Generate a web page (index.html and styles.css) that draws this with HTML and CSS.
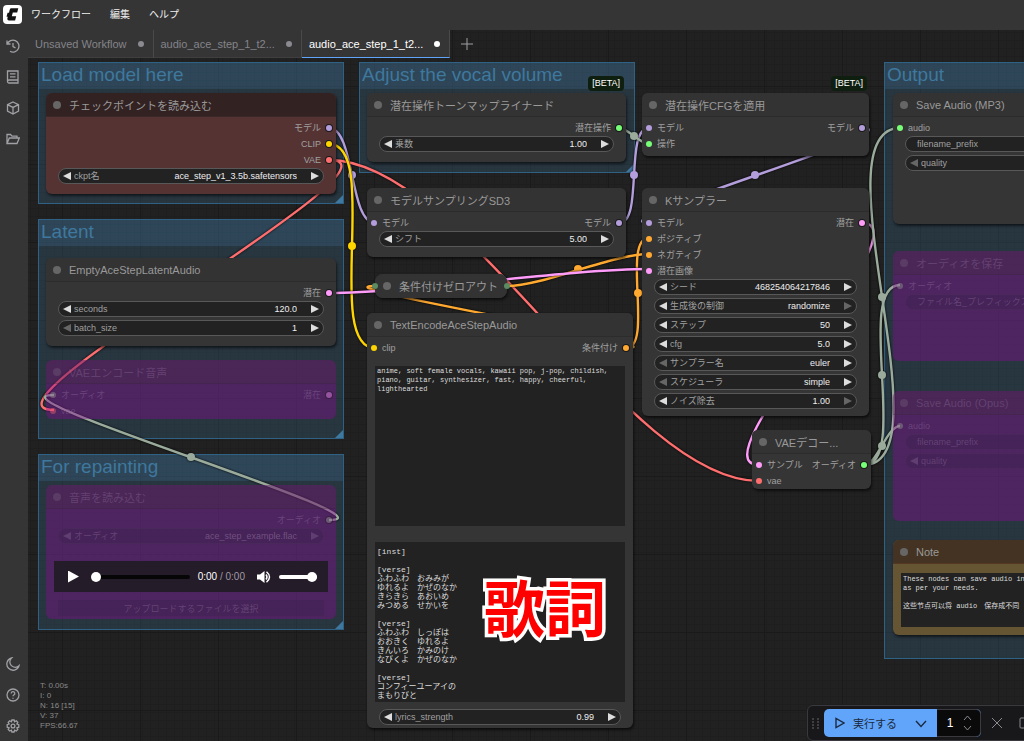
FILE: index.html
```html
<!DOCTYPE html>
<html lang="ja">
<head>
  <meta charset="UTF-8">
  <meta name="viewport" content="width=device-width, initial-scale=1.0">
  <title>audio_ace_step_1_t2a_song - ComfyUI</title>
  <link rel="stylesheet" href="styles.css">
</head>
<body>

  <!-- graph canvas, lies under the bars -->
  <main class="graph">

    <section class="group group-load"><h2>Load model here</h2></section>
    <section class="group group-vocal"><h2>Adjust the vocal volume</h2></section>
    <section class="group group-latent"><h2>Latent</h2></section>
    <section class="group group-repaint"><h2>For repainting</h2></section>
    <section class="group group-output"><h2>Output</h2></section>

    <svg class="links" aria-hidden="true">
      <g class="link model">
        <path d="M329 128C355 128 349 223 375 223"/><circle cx="352" cy="175" r="4"/>
        <path d="M619 223C644 223 624 128 649 128"/><circle cx="634" cy="175" r="4"/>
        <path d="M862 128C920 128 591 223 649 223"/><circle cx="755" cy="175" r="4"/>
      </g>
      <g class="link vae">
        <path d="M329 160C422 160 -39 410 54 410"/>
        <path d="M329 160C463 160 625 481 759 481"/>
      </g>
      <g class="link cond">
        <path d="M626 348C691 348 310 286 375 286"/>
        <path d="M507 286C543 286 613 254 649 254"/><circle cx="578" cy="269" r="4"/>
        <path d="M626 348C654 348 621 238 649 238"/><circle cx="638" cy="293" r="4"/>
      </g>
      <g class="link clip">
        <path d="M329 144C381 144 323 348 375 348"/><circle cx="352" cy="246" r="4"/>
      </g>
      <g class="link latent">
        <path d="M329 293C409 293 569 269 649 269"/>
        <path d="M862 223C928 223 693 465 759 465"/>
      </g>
      <g class="link other">
        <path d="M619 128C628 128 640 144 649 144"/><circle cx="634" cy="136" r="4"/>
        <path d="M864 465C949 465 815 128 900 128"/><circle cx="882" cy="297" r="4"/>
        <path d="M864 465C910 465 854 285 900 285"/><circle cx="882" cy="375" r="4"/>
        <path d="M864 465C877 465 887 426 900 426"/><circle cx="882" cy="446" r="4"/>
        <path d="M329 520C404 520 -21 395 54 395"/><circle cx="191" cy="457" r="4"/>
      </g>
    </svg>

    <article class="node red n-checkpoint">
      <h3>チェックポイントを読み込む</h3>
      <div class="slots">
        <div class="slot"><span class="out model">モデル</span></div>
        <div class="slot"><span class="out clip">CLIP</span></div>
        <div class="slot"><span class="out vae">VAE</span></div>
      </div>
      <div class="widgets">
        <div class="widget">
          <button class="prev" aria-label="前へ"></button>
          <label for="ckpt">ckpt名</label>
          <select id="ckpt"><option>ace_step_v1_3.5b.safetensors</option></select>
          <button class="next" aria-label="次へ"></button>
        </div>
      </div>
    </article>

    <article class="node n-empty">
      <h3>EmptyAceStepLatentAudio</h3>
      <div class="slots">
        <div class="slot"><span class="out latent">潜在</span></div>
      </div>
      <div class="widgets">
        <div class="widget">
          <button class="prev" aria-label="減らす"></button>
          <label for="seconds">seconds</label>
          <input id="seconds" value="120.0">
          <button class="next" aria-label="増やす"></button>
        </div>
        <div class="widget">
          <button class="prev" aria-label="減らす" disabled></button>
          <label for="batch">batch_size</label>
          <input id="batch" value="1">
          <button class="next" aria-label="増やす"></button>
        </div>
      </div>
    </article>

    <article class="node bypassed n-encode">
      <h3>VAEエンコード音声</h3>
      <div class="slots">
        <div class="slot"><span class="in other">オーディオ</span><span class="out latent">潜在</span></div>
        <div class="slot"><span class="in vae">vae</span></div>
      </div>
    </article>

    <article class="node bypassed n-loadaudio">
      <h3>音声を読み込む</h3>
      <div class="slots">
        <div class="slot"><span class="out other">オーディオ</span></div>
      </div>
      <div class="widgets">
        <div class="widget">
          <button class="prev" aria-label="前へ"></button>
          <label for="audio">オーディオ</label>
          <select id="audio"><option>ace_step_example.flac</option></select>
          <button class="next" aria-label="次へ"></button>
        </div>
      </div>
      <div class="player">
        <button class="play" aria-label="再生"></button>
        <input class="seek" type="range" min="0" max="100" value="0" aria-label="再生位置">
        <span class="time">0:00 <span>/ 0:00</span></span>
        <button class="mute" aria-label="ミュート">
          <svg viewBox="0 0 14 14" width="14" height="14">
            <path fill="#fff" d="M0 4.5H3L7.5 1V13L3 9.5H0Z"/>
            <path fill="none" stroke="#fff" stroke-width="1.5" d="M9 4.5Q11 7 9 9.5M9.5 1.8Q15.5 7 9.5 12.2"/>
          </svg>
        </button>
        <input class="volume" type="range" min="0" max="100" value="100" aria-label="音量">
      </div>
      <button class="upload">アップロードするファイルを選択</button>
    </article>

    <article class="node n-tonemap">
      <span class="beta">[BETA]</span>
      <h3>潜在操作トーンマップライナード</h3>
      <div class="slots">
        <div class="slot"><span class="out audio">潜在操作</span></div>
      </div>
      <div class="widgets">
        <div class="widget">
          <button class="prev" aria-label="減らす"></button>
          <label for="mult">乗数</label>
          <input id="mult" value="1.00">
          <button class="next" aria-label="増やす"></button>
        </div>
      </div>
    </article>

    <article class="node n-sd3">
      <h3>モデルサンプリングSD3</h3>
      <div class="slots">
        <div class="slot"><span class="in model">モデル</span><span class="out model">モデル</span></div>
      </div>
      <div class="widgets">
        <div class="widget">
          <button class="prev" aria-label="減らす"></button>
          <label for="shift">シフト</label>
          <input id="shift" value="5.00">
          <button class="next" aria-label="増やす"></button>
        </div>
      </div>
    </article>

    <article class="node collapsed n-zero">
      <h3>条件付けゼロアウト</h3>
    </article>

    <article class="node n-encodetext">
      <h3>TextEncodeAceStepAudio</h3>
      <div class="slots">
        <div class="slot"><span class="in clip">clip</span><span class="out cond">条件付け</span></div>
      </div>
      <div class="texts">
        <textarea class="tags" aria-label="tags" spellcheck="false">anime, soft female vocals, kawaii pop, j-pop, childish,
piano, guitar, synthesizer, fast, happy, cheerful,
lighthearted</textarea>
        <textarea class="lyrics" aria-label="lyrics" spellcheck="false">[inst]

[verse]
ふわふわ　おみみが
ゆれるよ　かぜのなか
きらきら　あおいめ
みつめる　せかいを

[verse]
ふわふわ　しっぽは
おおきく　ゆれるよ
きんいろ　かみのけ
なびくよ　かぜのなか

[verse]
コンフィーユーアイの
まもりびと</textarea>
      </div>
      <div class="widgets">
        <div class="widget">
          <button class="prev" aria-label="減らす"></button>
          <label for="strength">lyrics_strength</label>
          <input id="strength" value="0.99">
          <button class="next" aria-label="増やす"></button>
        </div>
      </div>
      <strong class="callout">歌詞</strong>
    </article>

    <article class="node n-cfg">
      <span class="beta">[BETA]</span>
      <h3>潜在操作CFGを適用</h3>
      <div class="slots">
        <div class="slot"><span class="in model">モデル</span><span class="out model">モデル</span></div>
        <div class="slot"><span class="in audio">操作</span></div>
      </div>
    </article>

    <article class="node n-sampler">
      <h3>Kサンプラー</h3>
      <div class="slots">
        <div class="slot"><span class="in model">モデル</span><span class="out latent">潜在</span></div>
        <div class="slot"><span class="in cond">ポジティブ</span></div>
        <div class="slot"><span class="in cond">ネガティブ</span></div>
        <div class="slot"><span class="in latent">潜在画像</span></div>
      </div>
      <div class="widgets">
        <div class="widget">
          <button class="prev" aria-label="減らす"></button>
          <label for="seed">シード</label>
          <input id="seed" value="468254064217846">
          <button class="next" aria-label="増やす"></button>
        </div>
        <div class="widget">
          <button class="prev" aria-label="前へ"></button>
          <label for="control">生成後の制御</label>
          <select id="control"><option>randomize</option></select>
          <button class="next" aria-label="次へ" disabled></button>
        </div>
        <div class="widget">
          <button class="prev" aria-label="減らす"></button>
          <label for="steps">ステップ</label>
          <input id="steps" value="50">
          <button class="next" aria-label="増やす"></button>
        </div>
        <div class="widget">
          <button class="prev" aria-label="減らす"></button>
          <label for="cfg">cfg</label>
          <input id="cfg" value="5.0">
          <button class="next" aria-label="増やす"></button>
        </div>
        <div class="widget">
          <button class="prev" aria-label="前へ" disabled></button>
          <label for="sampler">サンプラー名</label>
          <select id="sampler"><option>euler</option></select>
          <button class="next" aria-label="次へ"></button>
        </div>
        <div class="widget">
          <button class="prev" aria-label="前へ" disabled></button>
          <label for="scheduler">スケジューラ</label>
          <select id="scheduler"><option>simple</option></select>
          <button class="next" aria-label="次へ"></button>
        </div>
        <div class="widget">
          <button class="prev" aria-label="減らす"></button>
          <label for="denoise">ノイズ除去</label>
          <input id="denoise" value="1.00">
          <button class="next" aria-label="増やす" disabled></button>
        </div>
      </div>
    </article>

    <article class="node n-decode">
      <h3>VAEデコー...</h3>
      <div class="slots">
        <div class="slot"><span class="in latent">サンプル</span><span class="out audio">オーディオ</span></div>
        <div class="slot"><span class="in vae">vae</span></div>
      </div>
    </article>

    <article class="node n-mp3">
      <h3>Save Audio (MP3)</h3>
      <div class="slots">
        <div class="slot"><span class="in audio">audio</span></div>
      </div>
      <div class="widgets">
        <div class="widget plain">
          <label for="mp3name">filename_prefix</label>
          <input id="mp3name" value="">
        </div>
        <div class="widget">
          <button class="prev" aria-label="前へ" disabled></button>
          <label for="mp3q">quality</label>
          <input id="mp3q" value="">
        </div>
      </div>
    </article>

    <article class="node bypassed n-save">
      <h3>オーディオを保存</h3>
      <div class="slots">
        <div class="slot"><span class="in other">オーディオ</span></div>
      </div>
      <div class="widgets">
        <div class="widget plain">
          <label for="savename">ファイル名_プレフィックス</label>
          <input id="savename" value="">
        </div>
      </div>
    </article>

    <article class="node bypassed n-opus">
      <h3>Save Audio (Opus)</h3>
      <div class="slots">
        <div class="slot"><span class="in other">audio</span></div>
      </div>
      <div class="widgets">
        <div class="widget plain">
          <label for="opusname">filename_prefix</label>
          <input id="opusname" value="">
        </div>
        <div class="widget">
          <button class="prev" aria-label="前へ"></button>
          <label for="opusq">quality</label>
          <input id="opusq" value="">
        </div>
      </div>
    </article>

    <article class="node note n-note">
      <h3>Note</h3>
      <textarea aria-label="Note" spellcheck="false">These nodes can save audio in
as per your needs.

这些节点可以将 audio　保存成不同</textarea>
    </article>

    <div class="stats">
      <div>T: 0.00s</div>
      <div>I: 0</div>
      <div>N: 16 [15]</div>
      <div>V: 37</div>
      <div>FPS:66.67</div>
    </div>
  </main>

  <div class="app">
    <header class="topbar">
      <svg class="logo" viewBox="0 0 19 19" width="19" height="19">
        <rect width="19" height="19" rx="4" fill="#fff"/>
        <path fill="#111" d="M8 3.200H15.300L14.200 7.400H9.800L8.800 11.200H13.200L12.100 15.400H6C4.600 15.400 4.100 14.500 4.400 13.300L4.800 11.700H3.500L4.600 7.700H6L6.600 5.200C6.900 4 7.300 3.200 8 3.200Z"/>
      </svg>
      <nav class="menu">
        <button>ワークフロー</button>
        <button>編集</button>
        <button>ヘルプ</button>
      </nav>
    </header>

    <aside class="sidebar">
      <div>
        <button aria-label="履歴"><svg viewBox="0 0 14 14"><path d="M1 1.500v3.500h3.500M1.300 5A6 6 0 1 1 4 12.300M7 4v3.500l2.500 1.300"/></svg></button>
        <button aria-label="ノード"><svg viewBox="0 0 14 14"><path d="M1.500 1h10.500v12H3a1.500 1.500 0 0 1-1.500-1.500zM1.500 11.200C1.500 10.500 2 10 3 10h9M4 3.800h5.500M4 6.800h5.500"/></svg></button>
        <button aria-label="モデル"><svg viewBox="0 0 14 14"><path d="M7 1l5.500 2.600v6.600L7 13l-5.500-2.800V3.600zM1.500 3.600L7 6.400l5.500-2.800M7 6.400V13"/></svg></button>
        <button aria-label="ワークフロー"><svg viewBox="0 0 14 14"><path d="M1 11.500V2.500h3.500L6 4.200h5V6M1 11.500L3.300 6H13.300L11 11.500z"/></svg></button>
      </div>
      <div>
        <button aria-label="テーマ"><svg viewBox="0 0 14 14"><path d="M5.500 1A6.200 6.200 0 1 0 13 8.800 5.400 5.400 0 0 1 5.500 1z"/></svg></button>
        <button aria-label="ヘルプ"><svg viewBox="0 0 14 14"><circle cx="7" cy="7" r="6"/><path d="M5.200 5.400a1.800 1.800 0 1 1 2.600 1.600c-.6.300-.8.600-.8 1.300M7 9.700v1.100"/></svg></button>
        <button aria-label="設定"><svg viewBox="0 0 14 14"><path d="M5.900 1h2.200l.5 1.700 1.700-.9 1.500 1.600-.9 1.600 1.900.7v2.500l-1.900.6.900 1.600-1.500 1.600-1.700-.9-.5 1.900H5.900l-.5-1.900-1.700.9-1.500-1.600.9-1.600-1.900-.6V5.700L3.100 5l-.9-1.600 1.500-1.600 1.700.9z"/><circle cx="7" cy="7" r="1.900"/></svg></button>
      </div>
    </aside>

    <nav class="tabs">
      <button class="tab">Unsaved Workflow<i></i></button>
      <button class="tab">audio_ace_step_1_t2...<i></i></button>
      <button class="tab active">audio_ace_step_1_t2...<i></i></button>
      <button class="add" aria-label="新しいワークフロー"><svg viewBox="0 0 12 12" width="12" height="12"><path d="M6 0v12M0 6h12"/></svg></button>
    </nav>
  </div>

  <div class="actionbar">
    <svg class="grip" viewBox="0 0 7 11" width="7" height="11"><path d="M0 1h2M5 1h2M0 4h2M5 4h2M0 7h2M5 7h2M0 10h2M5 10h2"/></svg>
    <div class="queue">
      <button class="run"><svg viewBox="0 0 10 12" width="10" height="12"><path d="M1 1.500v9L9 6z"/></svg>実行する</button>
      <button class="more" aria-label="実行オプション"><svg viewBox="0 0 12 8" width="12" height="8"><path d="M1 1l5 5.500L11 1"/></svg></button>
      <div class="count">
        <input aria-label="バッチ数" value="1">
        <div class="spin">
          <button aria-label="増やす"><svg viewBox="0 0 9 6" width="9" height="6"><path d="M1 5l3.500-4L8 5"/></svg></button>
          <button aria-label="減らす"><svg viewBox="0 0 9 6" width="9" height="6"><path d="M1 1l3.500 4L8 1"/></svg></button>
        </div>
      </div>
    </div>
    <button class="tool" aria-label="キャンセル"><svg viewBox="0 0 12 12" width="12" height="12"><path d="M1 1l10 10M11 1L1 11"/></svg></button>
    <button class="tool" aria-label="キューをクリア"><svg viewBox="0 0 12 12" width="12" height="12"><rect x="1" y="1" width="10" height="10" rx="1"/></svg></button>
  </div>

</body>
</html>
```

FILE: styles.css
```css
* {
  box-sizing: border-box;
}

body {
  margin: 0;
  height: 100vh;
  overflow: hidden;
  background-color: #212121;
  font-family: "Liberation Sans", "Noto Sans CJK JP", sans-serif;
}

button, input, select, textarea {
  margin: 0;
  padding: 0;
  border: none;
  border-radius: 0;
  background: none;
  color: inherit;
  font: inherit;
  outline: none;
  appearance: none;
}

h2, h3 {
  margin: 0;
  font-weight: normal;
}

/* bars */

.app {
  display: grid;
  grid-template-columns: 28px 1fr;
  grid-template-rows: 30px 1fr;
  height: 100vh;
}

.topbar {
  grid-column: 1 / 3;
  position: relative;
  display: flex;
  align-items: center;
  gap: 9px;
  padding: 0 3px 2px;
  background-color: #353535;
}

.menu {
  display: flex;
  gap: 19px;
  padding-bottom: 2px;
  color: #eee;
  font-size: 10px;
}

.sidebar {
  position: relative;
  display: flex;
  flex-direction: column;
  justify-content: space-between;
  background-color: #353535;
}

.sidebar button {
  display: flex;
  align-items: center;
  justify-content: center;
  width: 25px;
  height: 31px;
}

.sidebar svg {
  width: 14px;
  height: 14px;
  fill: none;
  stroke: #a0a0a5;
  stroke-width: 1.3;
}

.tabs {
  position: relative;
  display: flex;
  align-self: start;
  height: 28px;
}

.tab {
  display: flex;
  align-items: center;
  justify-content: space-between;
  gap: 11px;
  padding: 0 9px 0 7px;
  border-right: 1px solid #4a4a4a;
  border-bottom: 1px solid #3f3f3f;
  background-color: #353535;
  color: #84848a;
  font-size: 11px;
}

.tab i {
  width: 6px;
  height: 6px;
  border-radius: 50%;
  background-color: #8a8a90;
}

.tab.active {
  border-bottom-color: #60a5fa;
  color: #fff;
}

.tab.active i {
  background-color: #fff;
}

.add {
  padding: 0 11px;
}

.add svg {
  display: block;
  stroke: #a0a0a5;
}

/* graph */

.graph {
  position: absolute;
  inset: 0;
  overflow: hidden;
  background-color: #212121;
  background-image:
    linear-gradient(#1a1a1a 1px, transparent 1px),
    linear-gradient(90deg, #1a1a1a 1px, transparent 1px),
    linear-gradient(#1e1e1e 1px, transparent 1px),
    linear-gradient(90deg, #1e1e1e 1px, transparent 1px);
  background-size: 78px 78px, 78px 78px, 8px 8px, 8px 8px;
  background-position: 62px 8px;
}

.group {
  position: absolute;
  border: 1px solid #2f6184;
  background-color: rgba(63, 120, 158, 0.25);
}

.group h2 {
  height: 26px;
  padding-left: 2px;
  background-color: rgba(63, 120, 158, 0.25);
  color: #3f789e;
  font-size: 19px;
  line-height: 23px;
  white-space: nowrap;
}

.group::after {
  content: "";
  position: absolute;
  right: 0;
  bottom: 0;
  width: 8px;
  height: 8px;
  background-color: #3f789e;
  clip-path: polygon(100% 0, 100% 100%, 0 100%);
}

.group-load { left: 38px; top: 62px; width: 306px; height: 142px; }
.group-vocal { left: 359px; top: 62px; width: 276px; height: 111px; }
.group-latent { left: 38px; top: 219px; width: 306px; height: 220px; }
.group-repaint { left: 38px; top: 454px; width: 306px; height: 176px; }
.group-output { left: 884px; top: 62px; width: 276px; height: 597px; }

.links {
  position: absolute;
  inset: 0;
  width: 100%;
  height: 100%;
}

.link {
  filter: drop-shadow(0 0 1px #000);
}

.link path {
  fill: none;
  stroke: var(--type);
  stroke-width: 2.4;
}

.link circle {
  fill: var(--type);
}

.model { --type: #b39ddb; }
.clip { --type: #ffd500; }
.vae { --type: #ff6e6e; }
.cond { --type: #ffa931; }
.latent { --type: #ff9cf9; }
.audio { --type: #77ff77; }
.other { --type: #9aab9c; }

.node {
  position: absolute;
  border-radius: 6px;
  background-color: #353535;
  box-shadow: 1px 2px 3px rgba(0, 0, 0, 0.6);
  color: #a0a0a0;
  font-size: 9px;
}

.node h3 {
  display: flex;
  align-items: center;
  gap: 8px;
  height: 24px;
  padding-left: 7px;
  border-bottom: 1px solid #2c2c2c;
  border-radius: 6px 6px 0 0;
  background-color: #333;
  color: #999;
  font-size: 11px;
  white-space: nowrap;
}

.node h3::before {
  content: "";
  width: 8px;
  height: 8px;
  border-radius: 50%;
  background-color: #666;
}

.slots {
  padding-top: 3px;
}

.slot {
  display: flex;
  height: 16px;
  padding: 0 4px;
  line-height: 16px;
  white-space: nowrap;
}

.slot span {
  display: flex;
  align-items: center;
  gap: 5px;
}

.slot .out {
  margin-left: auto;
}

.in::before, .out::after {
  content: "";
  width: 6px;
  height: 6px;
  border-radius: 50%;
  background-color: var(--type);
}

.out::after {
  box-shadow: 0 0 0 1px #1a1a1a;
}

.widgets {
  display: flex;
  flex-direction: column;
  gap: 3px;
  padding: 0 12px 10px;
}

.widget {
  display: flex;
  align-items: center;
  height: 16px;
  padding: 0 4px;
  border: 1px solid #585858;
  border-radius: 8px;
  background-color: #222;
  line-height: 14px;
  white-space: nowrap;
}

.widget label {
  margin-left: 3px;
}

.widget.plain label {
  margin-left: 7px;
}

.widget input, .widget select {
  flex: 1;
  width: 0;
  min-width: 0;
  height: 14px;
  margin-right: 14px;
  color: #eee;
  text-align: right;
  text-align-last: right;
}

.prev, .next {
  flex: none;
  width: 8px;
  height: 8px;
  background-color: #ddd;
  clip-path: polygon(0 0, 100% 50%, 0 100%);
}

.prev {
  clip-path: polygon(100% 0, 100% 100%, 0 50%);
}

.prev:disabled, .next:disabled {
  background-color: #666;
}

textarea {
  display: block;
  width: 100%;
  padding: 1px 2px;
  resize: none;
  overflow: hidden;
  background-color: #222;
  color: #ddd;
  font-family: "Liberation Mono", "Noto Sans CJK JP", monospace;
  font-size: 7px;
  line-height: 9px;
}

.texts {
  display: flex;
  flex-direction: column;
  gap: 16px;
  padding: 10px 8px 7px;
}

.texts textarea {
  height: 160px;
}

.texts .lyrics {
  padding-top: 5px;
  font-size: 8px;
}

.beta {
  position: absolute;
  right: 2px;
  bottom: 100%;
  margin-bottom: 2px;
  padding: 0 4px;
  border-radius: 4px;
  background-color: #0f1f0f;
  color: #fff;
  font-size: 9px;
  line-height: 15px;
}

/* lyrics mark over the text box */
.callout {
  position: absolute;
  left: 117px;
  top: 248px;
  color: #f00;
  font-family: "Noto Sans CJK JP", sans-serif;
  font-size: 61px;
  line-height: 90px;
  -webkit-text-stroke: 7px #fff;
  paint-order: stroke fill;
}

.red {
  background-color: #533;
}

.red h3 {
  border-color: #3c2828;
  background-color: #322;
}

.note {
  background-color: #653;
}

.note h3 {
  border-color: #543824;
  background-color: #432;
}

.note textarea {
  width: calc(100% - 16px);
  height: 54px;
  margin: 9px 8px 0;
  padding-top: 2px;
}

.bypassed {
  background-color: rgba(138, 13, 148, 0.4);
  box-shadow: none;
  color: rgba(160, 130, 175, 0.35);
}

.bypassed h3 {
  border-color: rgba(40, 30, 50, 0.2);
  background-color: rgba(60, 50, 50, 0.2);
  color: rgba(160, 130, 175, 0.3);
}

.bypassed h3::before {
  background-color: rgba(120, 100, 130, 0.35);
}

.bypassed .in::before, .bypassed .out::after {
  opacity: 0.4;
}

.bypassed .widget, .upload {
  border-color: rgba(90, 60, 105, 0.2);
  background-color: rgba(50, 34, 70, 0.3);
}

.bypassed .widget input, .bypassed .widget select {
  color: rgba(200, 170, 215, 0.35);
}

.bypassed .prev, .bypassed .next {
  background-color: rgba(200, 170, 215, 0.2);
}

.collapsed {
  border-radius: 8px;
}

.collapsed h3 {
  padding-left: 8px;
  border: none;
  border-radius: 8px;
}

.collapsed::before, .collapsed::after {
  content: "";
  position: absolute;
  top: 9px;
  left: -3px;
  width: 6px;
  height: 6px;
  border-radius: 50%;
  background-color: #5c8a62;
}

.collapsed::after {
  right: -3px;
  left: auto;
}

.player {
  display: flex;
  align-items: center;
  height: 31px;
  margin: 7px 8px 8px;
  padding: 0 11px 0 14px;
  background-color: #241c28;
  color: #fff;
  font-size: 10px;
}

.play {
  width: 11px;
  height: 12px;
  margin-right: 12px;
  background-color: #fff;
  clip-path: polygon(0 0, 100% 50%, 0 100%);
}

.player input {
  min-width: 0;
  height: 4px;
  border-radius: 2px;
}

.player input::-webkit-slider-thumb {
  width: 10px;
  height: 10px;
  border-radius: 50%;
  background-color: #fff;
  appearance: none;
}

.player .seek {
  flex: 1;
  margin-right: 8px;
  background-color: #060606;
}

.player .volume {
  width: 38px;
  background-color: #fff;
}

.time span {
  color: #a09aa4;
}

.mute {
  margin: 0 8px 0 12px;
}

.mute svg {
  display: block;
}

.upload {
  display: block;
  width: 266px;
  height: 16px;
  margin: 0 12px 3px;
}

.n-checkpoint { left: 46px; top: 93px; width: 290px; }
.n-empty { left: 46px; top: 258px; width: 290px; }
.n-encode { left: 46px; top: 360px; width: 290px; }
.n-loadaudio { left: 46px; top: 485px; width: 290px; }
.n-tonemap { left: 367px; top: 93px; width: 259px; }
.n-sd3 { left: 367px; top: 188px; width: 259px; }
.n-zero { left: 375px; top: 274px; width: 132px; }
.n-encodetext { left: 367px; top: 313px; width: 266px; }
.n-cfg { left: 642px; top: 93px; width: 227px; min-height: 63px; }
.n-sampler { left: 642px; top: 188px; width: 227px; }
.n-decode { left: 752px; top: 430px; width: 119px; }
.n-mp3 { left: 893px; top: 93px; width: 260px; min-height: 131px; }
.n-save { left: 893px; top: 251px; width: 260px; min-height: 110px; }
.n-opus { left: 893px; top: 391px; width: 260px; min-height: 130px; }
.n-note { left: 893px; top: 540px; width: 260px; min-height: 95px; }

.n-encodetext .widgets {
  padding-bottom: 3px;
}

.n-sampler .widgets {
  padding-bottom: 7px;
}

.stats {
  position: absolute;
  left: 40px;
  bottom: 10px;
  color: #8a8a8a;
  font-size: 8px;
  line-height: 10px;
}

/* run bar */

.actionbar {
  position: absolute;
  right: -18px;
  bottom: 0;
  display: flex;
  align-items: center;
  height: 36px;
  padding: 0 4px;
  border: 1px solid #3a3a3e;
  border-radius: 6px;
  background-color: #18181b;
}

.actionbar svg {
  fill: none;
  stroke: #8a8a90;
}

.actionbar .grip {
  margin-right: 5px;
  stroke: #66666c;
}

.queue {
  display: flex;
  height: 28px;
  border-radius: 5px;
  overflow: hidden;
  background-color: #60a5fa;
  color: #1c2a40;
}

.run {
  display: flex;
  align-items: center;
  gap: 8px;
  padding: 0 8px 0 11px;
  font-size: 11px;
}

.queue .run svg, .queue .more svg {
  stroke: #1c2a40;
  stroke-width: 1.4;
}

.more {
  width: 32px;
}

.count {
  display: flex;
  width: 44px;
  border: 1px solid #3a3a3e;
  border-left: none;
  border-radius: 0 5px 5px 0;
  background-color: #0a0a0b;
  color: #fff;
}

.count input {
  width: 26px;
  font-size: 12px;
  text-align: center;
}

.spin {
  display: flex;
  flex-direction: column;
  justify-content: space-evenly;
}

.spin svg {
  display: block;
}

.tool {
  padding: 0 6px;
  margin-left: 4px;
}

.tool svg {
  display: block;
}
```
